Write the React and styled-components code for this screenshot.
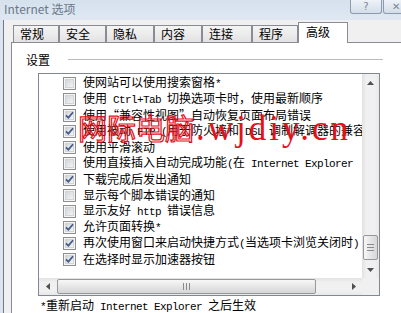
import React from 'react'
import styled, { createGlobalStyle } from 'styled-components'

const Global = createGlobalStyle`
  html, body { margin: 0; padding: 0; overflow: hidden; }
  body {
    width: 401px;
    height: 313px;
    background: #dbe5f0;
    font-family: "Noto Sans CJK SC", "Noto Sans", sans-serif;
  }
`

const tabs = [
  { label: '常规', w: 46 },
  { label: '安全', w: 47 },
  { label: '隐私', w: 48 },
  { label: '内容', w: 48 },
  { label: '连接', w: 50 },
  { label: '程序', w: 46 },
  { label: '高级', w: 50, active: true },
]

// rows as far as they show before the vertical scrollbar
const items = [
  { text: '使网站可以使用搜索窗格*', on: false },
  { text: '使用 Ctrl+Tab 切换选项卡时，使用最新顺序', on: false },
  { text: '使用“兼容性视图”自动恢复页面布局错误', on: true },
  { text: '使用被动 FTP (用于防火墙和 DSL 调制解调器的兼容', on: true },
  { text: '使用平滑滚动', on: true },
  { text: '使用直接插入自动完成功能(在 Internet Explorer', on: false },
  { text: '下载完成后发出通知', on: true },
  { text: '显示每个脚本错误的通知', on: false },
  { text: '显示友好 http 错误信息', on: false },
  { text: '允许页面转换*', on: true },
  { text: '再次使用窗口来启动快捷方式(当选项卡浏览关闭时)', on: true },
  { text: '在选择时显示加速器按钮', on: true },
]

const Window = styled.div`
  position: relative;
  width: 401px;
  height: 313px;
  overflow: hidden;
`

const TitleBar = styled.div`
  height: 20px;
  display: flex;
  justify-content: space-between;
  align-items: flex-start;
  background: linear-gradient(#d6e1ee, #dfe8f2);
`

const Title = styled.div`
  padding: 1px 0 0 4px;
  font-size: 12px;
  line-height: 16px;
  color: #6a7889;
`

const CaptionButtons = styled.div`
  display: flex;
  gap: 1px;
  margin-right: -26px;
`

const CapBtn = styled.div`
  width: ${p => p.$w}px;
  height: 14px;
  box-sizing: border-box;
  border: 1px solid #8d9aac;
  border-top: none;
  border-radius: 0 0 3px 3px;
  background: linear-gradient(#eef3f8, #d3dde9);
  display: flex;
  justify-content: ${p => (p.$w > 40 ? 'flex-start' : 'center')};
  padding-left: ${p => (p.$w > 40 ? 8 : 0)}px;
  align-items: center;
  font-family: "DejaVu Sans", sans-serif;
  font-size: 10px;
  color: #7a8698;
`

const Client = styled.div`
  margin-left: 3px;
  height: 293px;
  box-sizing: border-box;
  border-left: 1px solid #6f7b89;
  background: #f0f0f0;
  padding: 2px 0 0 7px;
`

const TabRow = styled.div`
  position: relative;
  z-index: 1;
  display: flex;
  align-items: flex-end;
  height: 21px;
  margin: 0 0 -1px 2px;
`

const Tab = styled.div`
  width: ${p => p.$w}px;
  height: ${p => (p.$active ? 21 : 17)}px;
  margin-bottom: ${p => (p.$active ? 0 : 1)}px;
  box-sizing: border-box;
  border: 1px solid #898c95;
  border-bottom: none;
  background: ${p => (p.$active ? '#fff' : 'linear-gradient(#f4f4f4, #ececec 50%, #e2e2e2)')};
  padding-left: ${p => (p.$active ? 7 : 6)}px;
  font-size: 12px;
  line-height: ${p => (p.$active ? 18 : 16)}px;
  color: #000;
`

const Panel = styled.div`
  width: 400px;
  height: 280px;
  box-sizing: border-box;
  border: 1px solid #898c95;
  background: #fff;
`

const GroupHeader = styled.div`
  display: flex;
  align-items: center;
  height: 14px;
  margin: 9px 0 0 14px;
  font-size: 12px;
`

const Rule = styled.div`
  width: 315px;
  height: 1px;
  margin-left: 18px;
  background: #b9bcc0;
`

const ListBox = styled.div`
  width: 342px;
  height: 223px;
  box-sizing: border-box;
  margin: 7px 0 0 26px;
  border: 1px solid #828790;
  overflow: hidden;
  display: grid;
  grid-template-columns: 323px 17px;
  grid-template-rows: 204px 17px;
`

const Items = styled.div`
  width: 323px;
  height: 204px;
  box-sizing: border-box;
  overflow: hidden;
  padding: 1px 0 0 24px;
`

const Row = styled.div`
  display: flex;
  align-items: center;
  gap: 7px;
  height: 16px;
  white-space: nowrap;
  font-size: 12px;
  line-height: 16px;
  color: #000;
`

const Half = styled.span`
  font-family: "Liberation Mono", monospace;
  font-size: 11px;
  letter-spacing: -0.6px;
`

const VScroll = styled.div`
  display: flex;
  flex-direction: column;
  background: linear-gradient(to right, #e2e2e2, #f0f0f0 25%, #f0f0f0 75%, #e8e8e8);
`

const HScroll = styled.div`
  display: flex;
  min-width: 0;
  background: linear-gradient(#e2e2e2, #f0f0f0 25%, #f0f0f0 75%, #e8e8e8);
`

const Arrow = styled.div`
  flex: none;
  width: 17px;
  height: 17px;
  display: flex;
  align-items: center;
  justify-content: center;
`

const VTrack = styled.div`
  flex: 1;
  padding-top: ${p => p.$offset}px;
`

const HTrack = styled.div`
  flex: 1;
  min-width: 0;
  padding-left: ${p => p.$offset}px;
  display: flex;
`

const Thumb = styled.div`
  box-sizing: border-box;
  flex: none;
  width: ${p => (p.$horizontal ? `${p.$len}px` : '15px')};
  height: ${p => (p.$horizontal ? '15px' : `${p.$len}px`)};
  margin: ${p => (p.$horizontal ? '1px 0 0 0' : '0 0 0 1px')};
  border: 1px solid #979797;
  border-radius: 2px;
  background: ${p => (p.$horizontal
    ? 'linear-gradient(#f7f7f7, #e6e6e6 50%, #d6d6d6)'
    : 'linear-gradient(to right, #f7f7f7, #e6e6e6 50%, #d6d6d6)')};
  display: flex;
  flex-direction: ${p => (p.$horizontal ? 'row' : 'column')};
  align-items: center;
  justify-content: center;
  gap: 2px;
`

const Grip = styled.div`
  width: ${p => (p.$horizontal ? '1px' : '7px')};
  height: ${p => (p.$horizontal ? '7px' : '1px')};
  background: #8a8a8a;
`

const Corner = styled.div`
  background: #f0f0f0;
`

const Footnote = styled.div`
  margin: 2px 0 0 28px;
  font-size: 12px;
  line-height: 14px;
  white-space: nowrap;
`

const Watermark = styled.div`
  position: absolute;
  left: 78px;
  top: 108px;
  display: flex;
  align-items: baseline;
  white-space: nowrap;
  pointer-events: none;
`

const WmCjk = styled.span`
  font-family: "Noto Sans CJK SC", sans-serif;
  font-size: 29px;
  line-height: 38px;
  color: transparent;
  -webkit-text-stroke: 1.2px #e4101a;
`

const WmLatin = styled.span`
  font-family: "Liberation Serif", serif;
  font-size: 35px;
  letter-spacing: 3px;
  color: #e4101a;
  margin-left: 2px;
`

const Mixed = ({ text }) =>
  text.split(/([\x20-\x7e]+)/).map((s, i) =>
    /[\x20-\x7e]/.test(s) ? <Half key={i}>{s}</Half> : s
  )

const CheckBox = ({ on }) => (
  <svg width="13" height="13" viewBox="0 0 13 13" style={{ flex: 'none' }}>
    <defs>
      <linearGradient id="cbg" x1="0" y1="0" x2="1" y2="1">
        <stop offset="0" stopColor="#cfd2d6" />
        <stop offset="1" stopColor="#f7f7f7" />
      </linearGradient>
    </defs>
    <rect x="0.5" y="0.5" width="12" height="12" fill="#f5f5f5" stroke="#8e8f8f" />
    <rect x="2.5" y="2.5" width="8" height="8" fill="url(#cbg)" stroke="#d0d3d7" />
    {on && (
      <path d="M3 6.3 L5.4 8.8 L10 3.2" fill="none" stroke="#3e5688" strokeWidth="1.7" />
    )}
  </svg>
)

const Tri = ({ dir }) => {
  const pts = {
    up: '0,4 3.5,0 7,4',
    down: '0,0 7,0 3.5,4',
    left: '4,0 4,7 0,3.5',
    right: '0,0 4,3.5 0,7',
  }[dir]
  const vert = dir === 'up' || dir === 'down'
  return (
    <svg width={vert ? 7 : 4} height={vert ? 4 : 7}>
      <polygon points={pts} fill="#505050" />
    </svg>
  )
}

const App = () => (
  <>
    <Global />
    <Window>
      <TitleBar>
        <Title>Internet 选项</Title>
        <CaptionButtons>
          <CapBtn $w={32}>?</CapBtn>
          <CapBtn $w={44}>✕</CapBtn>
        </CaptionButtons>
      </TitleBar>
      <Client>
        <TabRow>
          {tabs.map(t => (
            <Tab key={t.label} $w={t.w} $active={t.active}>{t.label}</Tab>
          ))}
        </TabRow>
        <Panel>
          <GroupHeader>
            设置
            <Rule />
          </GroupHeader>
          <ListBox>
            <Items>
              {items.map(it => (
                <Row key={it.text}>
                  <CheckBox on={it.on} />
                  <span><Mixed text={it.text} /></span>
                </Row>
              ))}
            </Items>
            <VScroll>
              <Arrow><Tri dir="up" /></Arrow>
              <VTrack $offset={144}>
                <Thumb $len={25}>
                  <Grip /><Grip /><Grip />
                </Thumb>
              </VTrack>
              <Arrow><Tri dir="down" /></Arrow>
            </VScroll>
            <HScroll>
              <Arrow><Tri dir="left" /></Arrow>
              <HTrack $offset={1}>
                <Thumb $horizontal $len={259}>
                  <Grip $horizontal /><Grip $horizontal /><Grip $horizontal />
                </Thumb>
              </HTrack>
              <Arrow><Tri dir="right" /></Arrow>
            </HScroll>
            <Corner />
          </ListBox>
          <Footnote><Mixed text="*重新启动 Internet Explorer 之后生效" /></Footnote>
        </Panel>
      </Client>
      <Watermark>
        <WmCjk>网际电脑</WmCjk>
        <WmLatin>.wjdiy.cn</WmLatin>
      </Watermark>
    </Window>
  </>
)

export default App
